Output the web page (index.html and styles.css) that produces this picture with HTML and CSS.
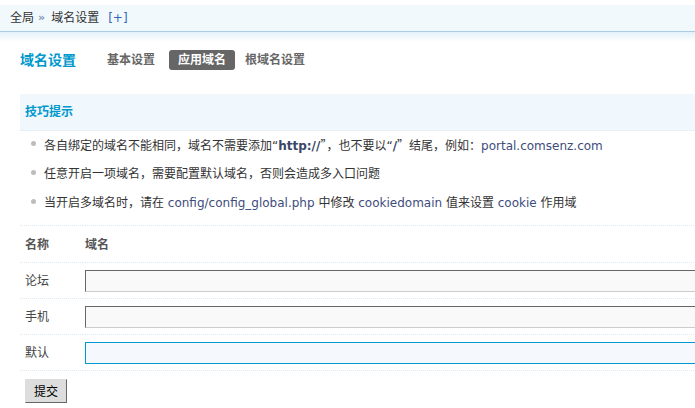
FILE: index.html
```html
<!DOCTYPE html>
<html lang="zh-CN">
<head>
<meta charset="utf-8">
<title>域名设置</title>
<link rel="stylesheet" href="styles.css">
</head>
<body>
<div class="topbar">
  <span class="crumb">全局</span>
  <span class="sep">»</span>
  <span class="crumb">域名设置</span>
  <a class="add" href="#">[+]</a>
</div>
<div class="shade"></div>
<div class="main">
  <div class="itemtitle">
    <h3>域名设置</h3>
    <ul class="tabs">
      <li class="tab tab-first">基本设置</li>
      <li class="tab current">应用域名</li>
      <li class="tab">根域名设置</li>
    </ul>
  </div>
  <div class="tips">
    <div class="tips-head">技巧提示</div>
    <ul class="tips-list">
      <li><span class="tip-text">各自绑定的域名不能相同，域名不需要添加“<b class="code">http://</b><span class="fw">”</span>，也不要以“<b class="code">/</b><span class="fw">”</span>结尾，例如：<span class="lat">portal.comsenz.com</span></span></li>
      <li><span class="tip-text">任意开启一项域名，需要配置默认域名，否则会造成多入口问题</span></li>
      <li><span class="tip-text">当开启多域名时，请在 <span class="lat">config/config_global.php</span> 中修改 <span class="lat">cookiedomain</span> 值来设置 <span class="lat">cookie</span> 作用域</span></li>
    </ul>
  </div>
  <table class="tb">
    <colgroup>
      <col class="c-name">
      <col class="c-domain">
    </colgroup>
    <tr class="head">
      <th class="col-name">名称</th>
      <th class="col-domain">域名</th>
    </tr>
    <tr>
      <td class="col-name">论坛</td>
      <td class="col-domain"><input class="txt" type="text"></td>
    </tr>
    <tr>
      <td class="col-name">手机</td>
      <td class="col-domain"><input class="txt" type="text"></td>
    </tr>
    <tr>
      <td class="col-name">默认</td>
      <td class="col-domain"><input class="txt txt-focus" type="text"></td>
    </tr>
    <tr class="submit-row">
      <td colspan="2"><button class="btn" type="button">提交</button></td>
    </tr>
  </table>
</div>
</body>
</html>
```
FILE: styles.css
```css
html {
  overflow: hidden;
}
body {
  margin: 0;
  background: #fff;
  color: #333;
  font: 12px/18px "DejaVu Sans", "Noto Sans CJK SC", sans-serif;
}
ul {
  list-style: none;
  margin: 0;
  padding: 0;
}
.topbar {
  margin-top: 5px;
  height: 26px;
  background: #F2F9FD;
  border-bottom: 1px solid #A9CDE0;
  display: flex;
  align-items: center;
  padding-left: 10px;
  color: #333;
}
.sep {
  margin: 0 6px 0 4px;
  color: #7F95B0;
  font-size: 11px;
  font-weight: bold;
}
.add {
  margin-left: 9px;
  color: #3366BB;
  text-decoration: none;
}
.shade {
  height: 10px;
  background: linear-gradient(#E4F1F8, #fff);
}
.main {
  padding-left: 20px;
  width: 720px;
}
.itemtitle {
  margin-top: 8px;
  display: flex;
  align-items: center;
  height: 20px;
}
.itemtitle h3 {
  margin: 0;
  width: 87px;
  font-size: 14px;
  line-height: 20px;
  color: #0099CC;
  font-weight: bold;
}
.tabs {
  display: flex;
  align-items: center;
}
.tab {
  font-weight: bold;
  color: #666;
  line-height: 20px;
  height: 20px;
}
.tab-first {
  margin-right: 14px;
}
.tab.current {
  background: #666;
  color: #fff;
  border-radius: 3px;
  padding: 0 9px;
  margin-right: 10px;
}
.tips {
  margin-top: 24px;
}
.tips-head {
  height: 36px;
  line-height: 36px;
  background: #F0F7FD;
  border-bottom: 1px dotted #DDE8F0;
  padding-left: 5px;
  color: #0099CC;
  font-weight: bold;
}
.tips-list {
  padding-bottom: 7px;
}
.tips-list li {
  display: flex;
  align-items: flex-start;
  box-sizing: border-box;
  height: 29px;
  padding: 5px 0 6px;
  line-height: 18px;
  overflow: hidden;
}
.tips-list li::before {
  content: "";
  flex: none;
  width: 5px;
  height: 5px;
  border-radius: 50%;
  background: #BDBDBD;
  margin: 5px 8px 0 11px;
}
.tip-text {
  display: block;
  height: 18px;
  color: #333;
  white-space: nowrap;
}
.code {
  color: #3A4666;
}
.fw {
  font-family: "Noto Sans CJK SC", sans-serif;
}
.lat {
  color: #3E4C7C;
}
.tb {
  border-collapse: collapse;
  table-layout: fixed;
  width: 720px;
}
.c-name {
  width: 65px;
}
.tb th,
.tb td {
  border-top: 1px dotted #DDE8F0;
  padding: 0;
  text-align: left;
  vertical-align: middle;
  box-sizing: border-box;
}
.tb th {
  height: 37px;
  font-weight: bold;
  color: #555;
  padding-top: 2px;
}
.tb td {
  height: 36px;
  color: #444;
}
.tb .col-name {
  padding-left: 5px;
}
.txt {
  display: block;
  box-sizing: border-box;
  width: 100%;
  height: 22px;
  margin: 1px 0 0;
  padding: 0 4px;
  border: 1px solid;
  border-color: #666 #ccc #ccc #666;
  background: #F9F9F9;
  font: 12px "DejaVu Sans", "Noto Sans CJK SC", sans-serif;
  outline: none;
}
.txt-focus {
  border-color: #0099CC;
  background: #F5F9FD;
}
.tb .submit-row td {
  height: auto;
  padding: 8px 0 0 5px;
  vertical-align: top;
}
.btn {
  display: block;
  width: 42px;
  height: 24px;
  padding: 0;
  background: #DDD;
  border: 1px solid;
  border-color: #DDD #666 #666 #DDD;
  color: #000;
  font: 12px/20px "Noto Sans CJK SC", sans-serif;
}
```
